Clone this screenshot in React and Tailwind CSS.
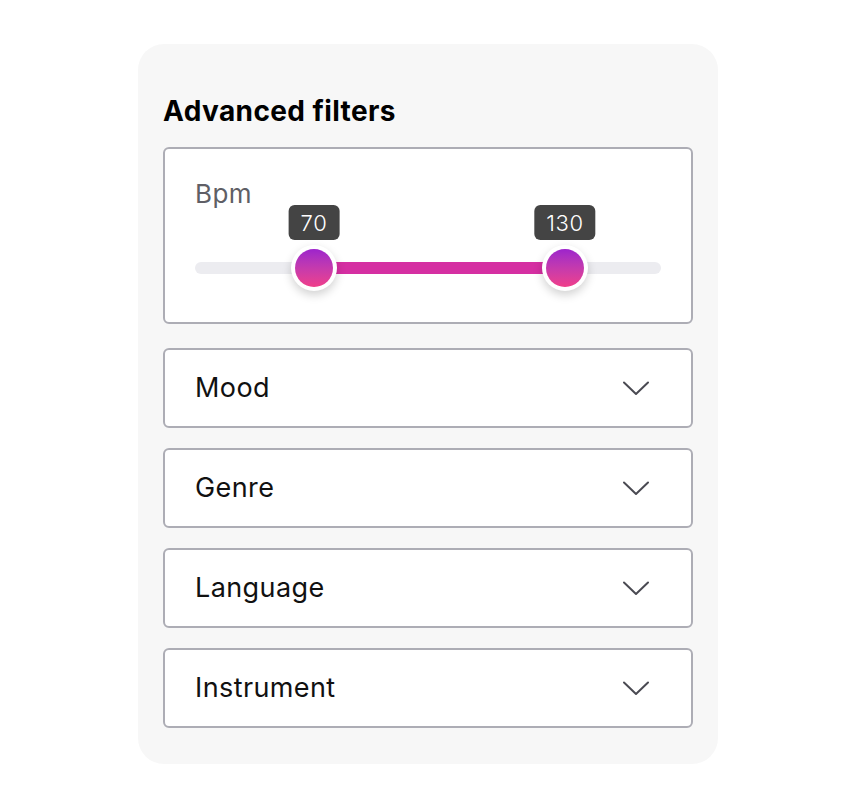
const filters = ["Mood", "Genre", "Language", "Instrument"]

const Chevron = () => (
  <svg width="26" height="15" viewBox="0 0 26 15" fill="none" className="text-[#4a4a52]">
    <path d="M1 1.5 L13 13 L25 1.5" stroke="currentColor" strokeWidth="2" strokeLinecap="round" strokeLinejoin="round" />
  </svg>
)

const Thumb = ({ left, value }) => (
  <div className="absolute top-1/2" style={{ left }}>
    <div className="absolute -translate-x-1/2 -translate-y-1/2 w-[46px] h-[46px] rounded-full bg-white p-[4px] shadow-[0_4px_10px_rgba(0,0,0,0.18)]">
      <div className="w-full h-full rounded-full bg-gradient-to-b from-[#9d22cc] to-[#f03e8a]"></div>
    </div>
    <div className="absolute -translate-x-1/2 bottom-[28px] bg-[#444444] text-white text-[22px] font-light tracking-[0.6px] leading-none px-[12px] pt-[7px] pb-[6px] rounded-[6px] whitespace-nowrap">
      {value}
    </div>
  </div>
)

const App = () => {
  return (
    <div className="w-[856px] h-[810px] bg-white flex items-start justify-center pt-[44px] font-['Inter',sans-serif]">
      <div className="w-[580px] h-[720px] bg-[#f7f7f7] rounded-[26px] px-[25px] pt-[52px]">
        <h1 className="text-[28px] font-bold text-black leading-[30px] tracking-[0.4px]">Advanced filters</h1>

        <div className="mt-[21px] h-[177px] bg-white border-2 border-[#adadb5] rounded-[6px] px-[30px] pt-[30px]">
          <div className="text-[26px] text-[#5f5f66] leading-[30px] tracking-[0.4px]">Bpm</div>
          <div className="relative mt-[53px] h-[12px] rounded-full bg-[#ececf0]">
            <div className="absolute top-0 h-full bg-[#d52fa2]" style={{ left: "119px", width: "251px" }}></div>
            <Thumb left="119px" value="70" />
            <Thumb left="370px" value="130" />
          </div>
        </div>

        <div className="mt-[24px] flex flex-col gap-[20px]">
          {filters.map((f) => (
            <div key={f} className="h-[80px] bg-white border-2 border-[#adadb5] rounded-[6px] pl-[30px] pr-[42px] flex items-center justify-between">
              <span className="text-[27px] text-[#111111] tracking-[0.4px]">{f}</span>
              <Chevron />
            </div>
          ))}
        </div>
      </div>
    </div>
  )
}

export default App
